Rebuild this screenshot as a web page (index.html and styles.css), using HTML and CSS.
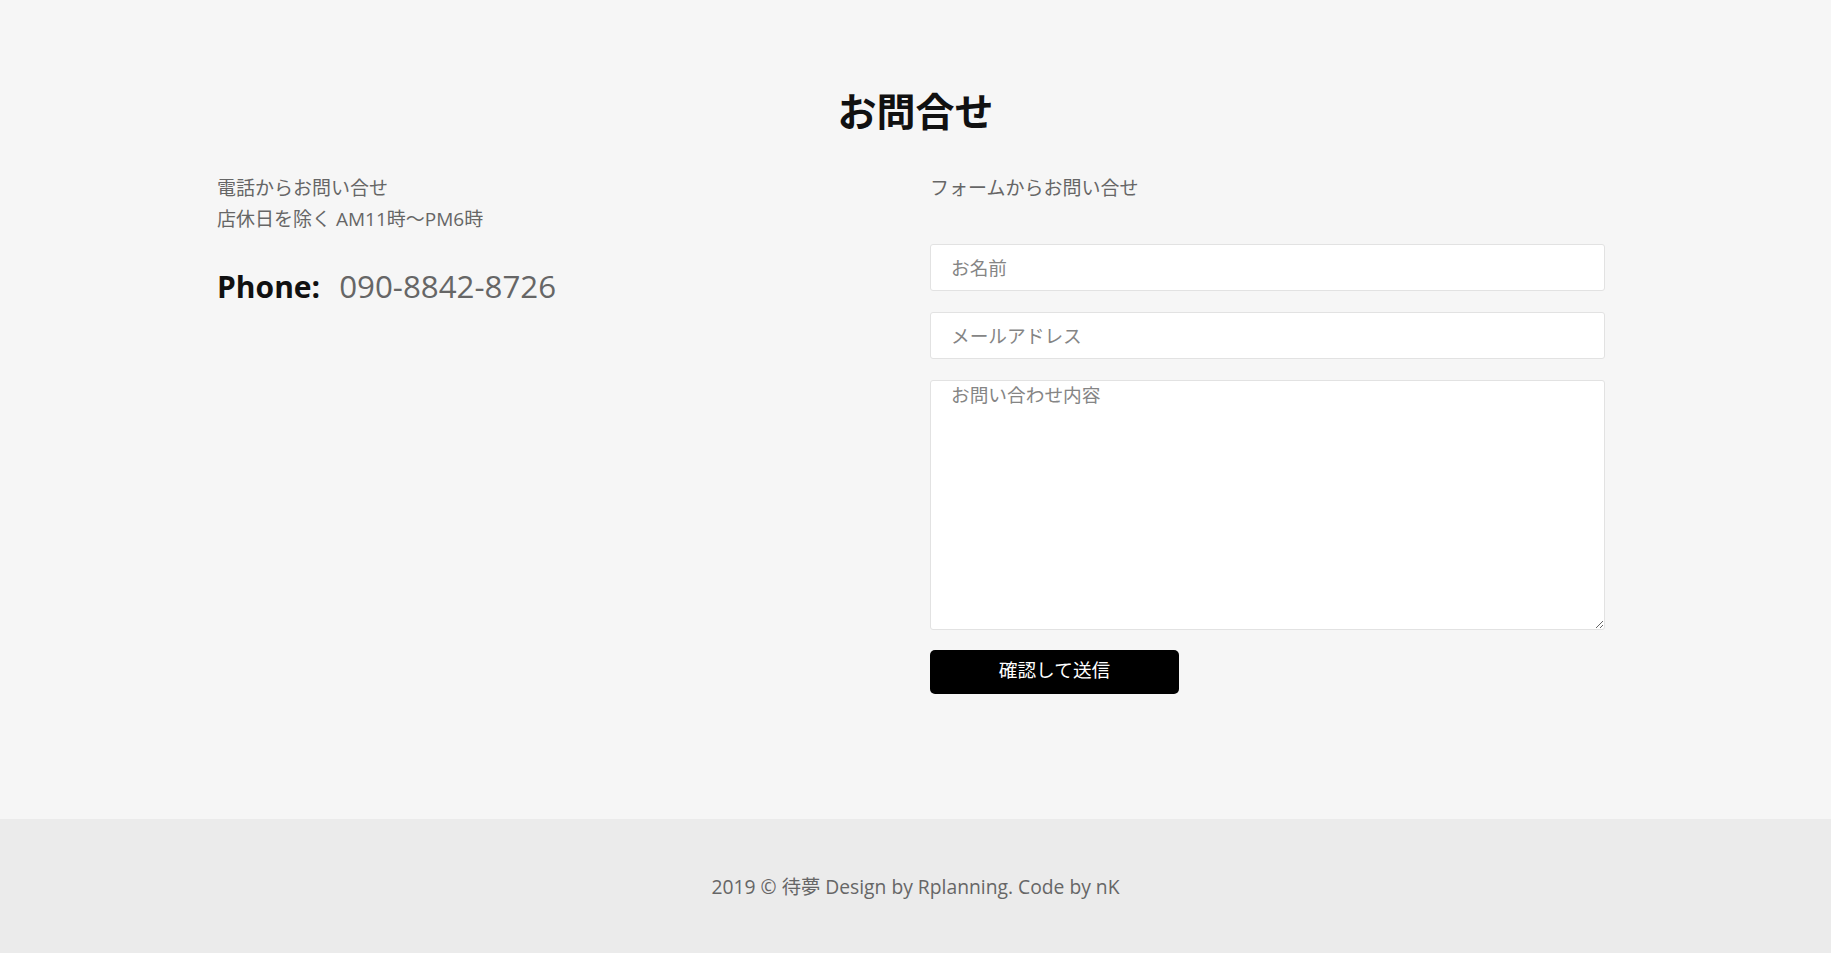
FILE: index.html
```html
<!DOCTYPE html>
<html lang="ja">
<head>
    <meta charset="UTF-8">
    <title>お問合せ</title>
    <link rel="stylesheet" href="styles.css">
</head>
<body>
    <section class="contact">
        <h1 class="contact__title">お問合せ</h1>
        <div class="contact__inner">
            <div class="contact__tel">
                <p class="contact__lead">電話からお問い合せ<br>店休日を除く AM11時～PM6時</p>
                <p class="contact__phone"><strong>Phone:</strong>090-8842-8726</p>
            </div>
            <div class="contact__mail">
                <p class="contact__lead">フォームからお問い合せ</p>
                <form class="form">
                    <input class="form__field" type="text" placeholder="お名前">
                    <input class="form__field" type="email" placeholder="メールアドレス">
                    <textarea class="form__field form__field--area" placeholder="お問い合わせ内容"></textarea>
                    <button class="form__submit" type="button">確認して送信</button>
                </form>
            </div>
        </div>
    </section>
    <footer class="footer">
        <p class="footer__text">2019 © 待夢 Design by Rplanning. Code by nK</p>
    </footer>
</body>
</html>
```

FILE: styles.css
```css
body {
    margin: 0;
    padding: 0;
    background: #f6f6f6;
    color: #666;
    font-family: "Open Sans", "Noto Sans CJK JP", sans-serif;
    font-size: 18.7px;
}

p {
    margin: 0;
}

.contact {
    padding: 89px 0 125px;
}

.contact__title {
    margin: 0 0 37px;
    text-align: center;
    font-family: "Liberation Serif", "Noto Sans CJK JP", serif;
    font-size: 39px;
    line-height: 47px;
    font-weight: bold;
    color: #111;
}

.contact__inner {
    width: 1397px;
    margin: 0 auto;
    display: grid;
    grid-template-columns: 713px 1fr;
}

.contact__lead {
    line-height: 31px;
    font-size: 19px;
}

.contact__phone {
    margin-top: 29.5px;
    font-size: 31.3px;
    line-height: 42px;
    color: #666;
}
.contact__phone strong {
    font-size: 30px;
    color: #111;
    margin-right: 19px;
}

.form {
    margin-top: 40px;
    max-width: 675px;
    display: flex;
    flex-direction: column;
    gap: 21px;
}

.form__field {
    display: block;
    box-sizing: border-box;
    width: 100%;
    height: 47px;
    margin: 0;
    padding: 0 20px 1px;
    border: 1px solid #e2e2e2;
    border-radius: 3px;
    background: #fff;
    font-family: inherit;
    font-size: 18.7px;
    color: #444;
    outline: none;
}
.form__field::placeholder {
    color: #858585;
}

.form__field--area {
    height: 250px;
    padding-top: 0;
    line-height: 27px;
}

.form__submit {
    box-sizing: border-box;
    width: 249px;
    height: 44px;
    margin-top: -1px;
    padding: 0 0 7px;
    border: 0;
    border-radius: 5px;
    background: #000;
    color: #fff;
    font-family: inherit;
    font-size: 18.7px;
    cursor: pointer;
}

.footer {
    background: #ebebeb;
    height: 134px;
    display: flex;
    align-items: center;
    justify-content: center;
}
.footer__text {
    font-size: 19.3px;
    line-height: 27px;
    color: #666;
}
```
